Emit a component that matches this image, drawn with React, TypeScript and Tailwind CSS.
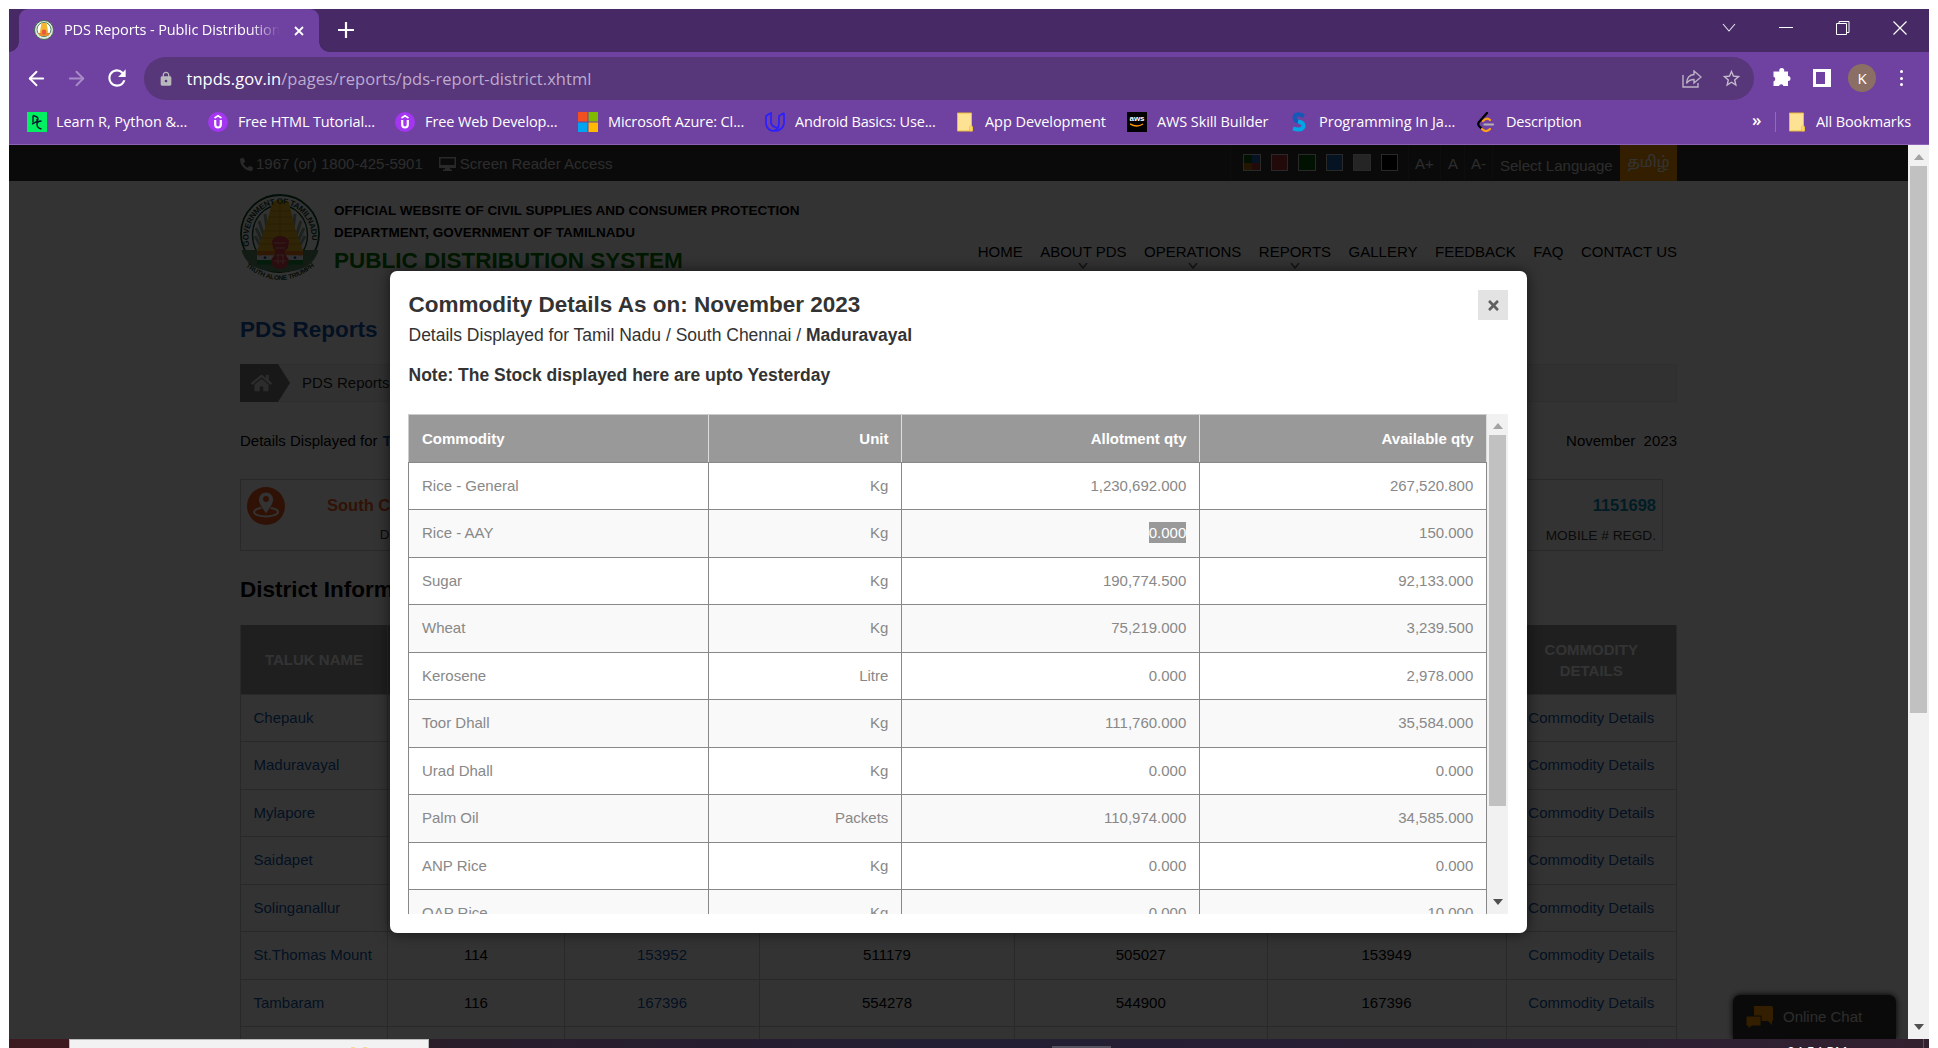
import React from "react";
import { FaPhone, FaHome, FaTimes } from "react-icons/fa";
import { FiArrowLeft, FiArrowRight } from "react-icons/fi";
import { MdRefresh, MdLock, MdStarBorder } from "react-icons/md";

const ui = "font-['Open_Sans','Noto_Sans',sans-serif]";

function Emblem({ className }: { className?: string }) {
  return (
    <svg viewBox="0 0 80 88" className={className} preserveAspectRatio="none">
      <defs>
        <path id="arcTop" d="M10 54 A31.500 34 0 1 1 70 54" />
        <path id="arcBottom" d="M4 71 Q40 101 76 71" />
      </defs>
      <ellipse cx="40" cy="39.500" rx="39" ry="38.500" fill="#fff" stroke="#0c4a26" strokeWidth="1.800" />
      <ellipse cx="40" cy="41" rx="27.500" ry="30" fill="#fff" stroke="#0c4a26" strokeWidth="1.400" />
      <path d="M25 20 L27 36 M19 27 L24 42 M16 34 L22 47 M15 42 L20 51 M55 20 L53 36 M61 27 L56 42 M64 34 L58 47 M65 42 L60 51" stroke="#8fab96" strokeWidth="3" />
      <path d="M32 8 q8 -5 17 0 L51 17 L55 34 L63 57 H17 L25 34 L30 17 Z" fill="#eeb422" />
      <path d="M31 17h19M29 23h23M27 30h26M25 37h31M22 44h36M20 50h41M40 10v32" stroke="#c98f12" strokeWidth=".8" />
      <path d="M1.500 56 H17 V70 H63 V56 H78.500 Q73 78 40 78 Q7 78 1.500 56Z" fill="#5b8a6b" />
      <rect x="17" y="57" width="46" height="4.500" fill="#ef7b1a" />
      <rect x="17" y="61.500" width="46" height="4.500" fill="#f4f4f4" />
      <rect x="17" y="66" width="46" height="4.500" fill="#108a3c" />
      <circle cx="25" cy="63.700" r="1.400" fill="#2c50b0" />
      <circle cx="55" cy="63.700" r="1.400" fill="#2c50b0" />
      <path d="M32 47 Q34 42 40 42 Q46 42 49 47 L48 54 L45 57 V60 L49 66 Q48 75 40 75 Q32 75 31 66 L35 60 V57 L33 54Z" fill="#d8404a" />
      <path d="M34 49h12M35 54h10M36 61h8M34 67h12M38 61v9M43 61v9" stroke="#f2a0a0" strokeWidth="1" />
      <text className="font-['Liberation_Sans',sans-serif] text-[8px] font-bold" fill="#133d26">
        <textPath href="#arcTop" startOffset="2" textLength="114">GOVERNMENT OF TAMILNADU</textPath>
      </text>
      <text className="font-['Liberation_Sans',sans-serif] text-[6.500px] font-bold" fill="#133d26">
        <textPath href="#arcBottom" startOffset="2" textLength="80">TRUTH ALONE TRIUMPHS</textPath>
      </text>
    </svg>
  );
}

function TabStrip() {
  return (
    <div className="flex h-[43px] shrink-0 bg-[#472a65] pl-[10px] text-white">
      <div className="relative flex h-full w-[300px] items-center rounded-t-[9px] bg-[#6f41a0] pl-[15px]">
        <span className="absolute bottom-0 -left-[10px] h-[10px] w-[10px] bg-[radial-gradient(circle_at_0_0,#472a65_9.500px,#6f41a0_10px)]" />
        <span className="absolute bottom-0 -right-[10px] h-[10px] w-[10px] bg-[radial-gradient(circle_at_100%_0,#472a65_9.500px,#6f41a0_10px)]" />
        <svg viewBox="0 0 20 20" className="h-5 w-5 -translate-y-px">
          <circle cx="10" cy="10" r="9.500" fill="#dfe9dc" stroke="#426c4d" />
          <circle cx="10" cy="9.500" r="7" fill="#fff" stroke="#4c8060" />
          <path d="M7.500 3h5l2 11h-9z" fill="#f3b62e" />
          <path d="M4 13h12l-2 3H6z" fill="#e8882d" />
          <circle cx="10" cy="12" r="2.400" fill="#e8593f" />
        </svg>
        <div className={`ml-[10px] w-[216px] -translate-y-px overflow-hidden text-[14.500px] whitespace-nowrap tracking-[-0.120px] ${ui} [mask-image:linear-gradient(to_right,#000_86%,transparent_100%)]`}>
          PDS Reports - Public Distribution
        </div>
        <svg viewBox="0 0 10 10" className="ml-[14px] h-[10px] w-[10px]" stroke="#fff" strokeWidth="1.800">
          <path d="M1 1l8 8M9 1l-8 8" />
        </svg>
      </div>
      <svg viewBox="0 0 16 16" className="mt-[13px] ml-[19px] h-4 w-4" stroke="#fff" strokeWidth="2.200">
        <path d="M8 0v16M0 8h16" />
      </svg>
      <div className="ml-auto flex gap-[43px] pt-3 pr-[22px]">
        <svg viewBox="0 0 14 14" className="h-[14px] w-[14px]" fill="none" stroke="#e8e4ee" strokeWidth="1.100"><path d="M1 3l6 7 6-7" /></svg>
        <svg viewBox="0 0 14 14" className="h-[14px] w-[14px]" stroke="#fff"><path d="M0 6.500h14" /></svg>
        <svg viewBox="0 0 14 14" className="h-[14px] w-[14px]" fill="none" stroke="#fff"><path d="M.5 2.500h10v11H.5zM3 2.500V.5h10v11h-2.500" /></svg>
        <svg viewBox="0 0 14 14" className="h-[14px] w-[14px]" stroke="#fff" strokeWidth="1.200"><path d="M.5 .5l13 13M13.500 .5l-13 13" /></svg>
      </div>
    </div>
  );
}

function Toolbar() {
  return (
    <div className={`flex h-12 shrink-0 pt-[5px] ${ui}`}>
      <div className="flex h-[42px] w-[135px] items-center pl-[16px] text-white">
        <FiArrowLeft className="h-[23px] w-[23px]" />
        <FiArrowRight className="ml-[17px] h-[23px] w-[23px] text-[#a98bc8]" />
        <MdRefresh className="ml-[16px] h-[26px] w-[26px]" />
      </div>
      <div className="flex h-[43px] w-[1610px] items-center rounded-full bg-[#573679] pr-[12px] pl-[14px]">
        <MdLock className="h-4 w-4 text-[#b9b9bd]" />
        <div className="ml-[12.500px] translate-y-px text-[16.500px] tracking-[0.045px] whitespace-nowrap text-[#bdabd0]">
          <span className="text-white">tnpds.gov.in</span>/pages/reports/pds-report-district.xhtml
        </div>
        <svg viewBox="0 0 20 18" className="mr-[19px] ml-auto h-[18px] w-[20px]" fill="none" stroke="#bcb2c6" strokeWidth="1.400">
          <path d="M1 5v12h15v-4M12 1l7 6-7 6V9.500q-5 0-7.500 4Q5 5 12 4.500z" />
        </svg>
        <MdStarBorder className="h-[21px] w-[21px] text-[#c4bacd]" />
      </div>
      <div className="flex h-[42px] items-center pl-[18px]">
        <svg viewBox="0 0 20 20" className="h-5 w-5 -translate-y-px" fill="#fff">
          <path d="M3 4.500h4.500a2.500 2.500 0 1 1 4.500 0h4v4.500a2.500 2.500 0 1 1 0 5v5h-4.500a2.300 2.300 0 0 0-4.500 0H1.500v-4.500a2.500 2.500 0 0 0 0-4.800V4.500z" />
        </svg>
        <div className="ml-[21px] h-[18px] w-[18px] border-[3px] border-r-[6px] border-white" />
        <div className="ml-[17px] flex h-7 w-7 items-center justify-center rounded-full bg-[#8b6f64] text-[15px] text-white">K</div>
        <div className="ml-[24px] flex flex-col gap-[3.500px]">
          <span className="h-[3px] w-[3px] rounded-full bg-white" />
          <span className="h-[3px] w-[3px] rounded-full bg-white" />
          <span className="h-[3px] w-[3px] rounded-full bg-white" />
        </div>
      </div>
    </div>
  );
}

function Folder() {
  return (
    <svg viewBox="0 0 20 20" className="h-5 w-5">
      <path d="M2.500 1h14v13l1 1v4h-15z" fill="#fde293" stroke="#e8b93c" />
      <path d="M14.500 19v-4l1.500-1.500 1.500 1.500v4z" fill="#fbd667" stroke="#e8b93c" strokeWidth=".6" />
    </svg>
  );
}

function Udemy() {
  return (
    <svg viewBox="0 0 20 20" className="h-5 w-5">
      <circle cx="10" cy="10" r="10" fill="#a435f0" />
      <path d="M6.500 6L10 3.800 13.500 6" fill="none" stroke="#fff" strokeWidth="1.600" />
      <path d="M7.200 8v4.500q0 3 2.800 3t2.800-3V8" fill="none" stroke="#fff" strokeWidth="2.200" />
    </svg>
  );
}

const bookmarks: { w: string; text: string; track: string; icon: React.ReactNode }[] = [
  {
    w: "w-[181px] gap-[9px]", text: "Learn R, Python &...", track: "tracking-[-0.050px]",
    icon: <svg viewBox="0 0 20 20" className="h-5 w-5"><path fill="#03ef62" d="M0 0h20v20H0z" /><path d="M6 3.500v7M6 3.500q5 1 5 3.500t-6 5M14.500 9q-4.500 0-4.500 3.500t4.500 4.500M10 7v6" fill="none" stroke="#05192d" strokeWidth="1.400" /></svg>,
  },
  { w: "w-[187px] gap-[10px]", text: "Free HTML Tutorial...", track: "tracking-[-0.150px]", icon: <Udemy /> },
  { w: "w-[183px] gap-[10px]", text: "Free Web Develop...", track: "tracking-[-0.100px]", icon: <Udemy /> },
  {
    w: "w-[187px] gap-[10px]", text: "Microsoft Azure: Cl...", track: "tracking-[-0.100px]",
    icon: <svg viewBox="0 0 20 20" className="h-5 w-5"><path fill="#f25022" d="M0 0h9.500v9.500H0z" /><path fill="#7fba00" d="M10.500 0H20v9.500h-9.500z" /><path fill="#00a4ef" d="M0 10.500h9.500V20H0z" /><path fill="#ffb900" d="M10.500 10.500H20V20h-9.500z" /></svg>,
  },
  {
    w: "w-[190px] gap-[10px]", text: "Android Basics: Use...", track: "tracking-[-0.170px]",
    icon: <svg viewBox="0 0 20 20" className="h-5 w-5" fill="none" stroke="#2b1fff" strokeWidth="1.700"><path d="M5 1.500L1 4v8q1 6 7 7 3-1 5-3-6-1-7-5V1zM19 1l-5 3v8q0 3-2 4M19 1v11q-2 7-10 7" /></svg>,
  },
  { w: "w-[172px] gap-[10px]", text: "App Development", track: "tracking-[-0.050px]", icon: <Folder /> },
  {
    w: "w-[162px] gap-[10px]", text: "AWS Skill Builder", track: "tracking-[-0.100px]",
    icon: <span className="flex h-5 w-5 flex-col items-center bg-black pt-[2px] font-['Liberation_Sans',sans-serif] text-[8px] leading-[9px] font-bold tracking-normal text-white">aws<svg viewBox="0 0 14 4" className="h-1 w-[14px] shrink-0" fill="none" stroke="#ff9900" strokeWidth="1.500"><path d="M0 1q7 4 13 0" /></svg></span>,
  },
  {
    w: "w-[187px] gap-[10px]", text: "Programming In Ja...", track: "tracking-[0px]",
    icon: <svg viewBox="0 0 20 20" className="h-5 w-5" fill="none" strokeWidth="4"><path d="M15 4Q6 0 5.500 5.500 5.500 9 10 10" stroke="#1458b8" /><path d="M9 9.500q6 1 5.500 5Q13 19 4 16.500" stroke="#00a7e6" /></svg>,
  },
  {
    w: "w-[160px] gap-[10px]", text: "Description", track: "tracking-[-0.180px]",
    icon: <svg viewBox="0 0 20 20" className="h-5 w-5" fill="none" strokeWidth="2.200" strokeLinecap="round"><path d="M11 1L3 10q-1.500 2 0 4l3 3" stroke="#000" /><path d="M7 9q4-4 7-1M6 17q4 4 8 0" stroke="#ffa116" /><path d="M8.500 12.500H17" stroke="#b3b3b3" /></svg>,
  },
];

function BookmarksBar() {
  return (
    <div className={`flex h-[45px] shrink-0 items-center border-b border-[#8b62b5] pl-[18px] text-[14.500px] whitespace-nowrap text-white ${ui}`}>
      {bookmarks.map((b) => (
        <div key={b.text} className={`flex shrink-0 items-center ${b.w} ${b.track}`}>
          {b.icon}
          <span>{b.text}</span>
        </div>
      ))}
      <span className="ml-[116px] w-[10px] -translate-y-[2px] text-[17px] font-semibold">»</span>
      <span className="ml-[13px] h-5 w-px bg-[#8f6cb8]" />
      <div className="ml-[11px] flex items-center gap-[9px] tracking-[-0.130px]">
        <Folder />
        All Bookmarks
      </div>
    </div>
  );
}

const swatches = ["bg-[#a83232]", "bg-[#0b5a0b]", "bg-[#1b62ad]", "bg-[#bbbbbb]", "bg-black"];

function TopBar() {
  return (
    <div className="h-9 shrink-0 bg-[#333]">
      <div className="ml-[231px] flex h-full w-[1437px] text-[15px] text-white">
        <div className="flex h-[38px] items-center">
          <FaPhone className="h-[13px] w-[13px] -scale-x-100 text-[#ccc]" />
          <span className="ml-[3px] text-[#ddd]">1967 (or) 1800-425-5901</span>
          <svg viewBox="0 0 17 14" className="ml-[16px] h-[14px] w-[17px]" fill="#ccc"><path fillRule="evenodd" d="M0 0h17v11h-6v1.500h2V14H4v-1.500h2V11H0zM1.500 1.500v6.500h14V1.500z" /></svg>
          <span className="ml-1 text-[#ddd]">Screen Reader Access</span>
        </div>
        <div className="ml-auto flex h-full text-[#ddd]">
          <div className="flex gap-[10px] border-x border-[#444] pt-[9px] pr-[10px] pl-[12px]">
            <span className="grid h-[17px] w-[17.500px] grid-cols-2 border border-[#ccc]">
              <i className="bg-[#0b5a0b]" /><i className="bg-[#1b62ad]" /><i className="bg-[#b26a00]" /><i className="bg-[#a83232]" />
            </span>
            {swatches.map((s) => (
              <span key={s} className={`h-[17px] w-[17.500px] border border-[#ccc] ${s}`} />
            ))}
          </div>
          <span className="w-[32px] border-r border-[#444] pl-[6px] leading-[37px]">A+</span>
          <span className="w-[24px] border-r border-[#444] pl-[7px] leading-[37px]">A</span>
          <span className="w-[28px] border-r border-[#444] pl-[6px] leading-[37px]">A-</span>
          <span className="w-[127px] pl-[7px] leading-[41px] whitespace-nowrap">Select Language</span>
          <span className="w-[57px] bg-[#f90] text-center font-['Noto_Sans_Tamil','Lohit_Tamil','FreeSerif','Noto_Sans',sans-serif] text-[15px] leading-[37px] whitespace-nowrap text-white">தமிழ்</span>
        </div>
      </div>
    </div>
  );
}

const nav = [
  { label: "HOME" },
  { label: "ABOUT PDS", menu: true },
  { label: "OPERATIONS", menu: true },
  { label: "REPORTS", menu: true },
  { label: "GALLERY" },
  { label: "FEEDBACK" },
  { label: "FAQ" },
  { label: "CONTACT US" },
];

const taluks = [
  ["Chepauk", "98", "141230", "462101", "455310", "141228"],
  ["Maduravayal", "96", "139412", "470225", "463018", "139410"],
  ["Mylapore", "104", "128834", "421907", "415222", "128830"],
  ["Saidapet", "101", "132590", "435168", "428840", "132588"],
  ["Solinganallur", "112", "150377", "498204", "491355", "150371"],
  ["St.Thomas Mount", "114", "153952", "511179", "505027", "153949"],
  ["Tambaram", "116", "167396", "554278", "544900", "167396"],
  ["", "", "", "", "", ""],
];

const talukCols = "grid grid-cols-[147px_177px_195px_255px_252.500px_239px_170.500px]";

function Site() {
  return (
    <div className="flex h-full flex-col bg-white">
      <TopBar />
      <div className="ml-[231px] w-[1437px] grow text-[15px] text-black">
        <div className="flex h-[121px] pt-[13px]">
          <Emblem className="h-[88px] w-[80px]" />
          <div className="ml-[14px] pt-[6px] font-bold whitespace-nowrap">
            <div className="text-[13.500px] leading-[22px]">
              <div>OFFICIAL WEBSITE OF CIVIL SUPPLIES AND CONSUMER PROTECTION</div>
              <div>DEPARTMENT, GOVERNMENT OF TAMILNADU</div>
            </div>
            <div className="mt-[2px] text-[22.500px] leading-[30px] text-[#007a00]">PUBLIC DISTRIBUTION SYSTEM</div>
          </div>
          <nav className="ml-auto flex gap-[17.500px] pt-[48px] text-[15px]">
            {nav.map((n) => (
              <div key={n.label} className="flex flex-col items-center leading-[20px] whitespace-nowrap">
                {n.label}
                {n.menu && (
                  <svg viewBox="0 0 10 6" className="mt-px h-[6px] w-[10px]" fill="none" stroke="#666" strokeWidth="1.600"><path d="M1 0l4 5 4-5" /></svg>
                )}
              </div>
            ))}
          </nav>
        </div>
        <h1 className="mt-[14px] text-[22.500px] leading-[28px] font-bold text-[#1356a8]">PDS Reports</h1>
        <div className="mt-[20px] flex h-[38px] items-center border border-[#eaeaea] bg-[#f5f5f5] text-[15px] text-[#222]">
          <div className="-my-px -ml-px flex h-[38px] w-[50px] items-center bg-[#777] pl-[11px] [clip-path:polygon(0_0,76%_0,100%_50%,76%_100%,0_100%)]">
            <FaHome className="h-[20px] w-[21px] text-[#ddd]" />
          </div>
          <span className="ml-[12px]">PDS Reports</span>
        </div>
        <div className="mt-[29px] flex h-[20px] justify-between text-[15px] leading-5">
          <span>Details Displayed for <b className="ml-px text-[#1356a8]">Tamil Nadu / South Chennai</b></span>
          <span className="whitespace-pre">November  2023</span>
        </div>
        <div className="mt-[28px] flex h-[72px] w-[1423px] justify-between border border-[#ccc] pt-[7px] pr-[6px] pl-[6px]">
          <svg viewBox="0 0 38 38" className="h-[38px] w-[38px]">
            <circle cx="19" cy="19" r="19" fill="#e85a1c" />
            <ellipse cx="19" cy="25" rx="12" ry="4.500" fill="none" stroke="#fff" strokeWidth="2" />
            <path d="M19 27C15 21 11.500 17 11.500 12.500a7.500 7.500 0 0 1 15 0C26.500 17 23 21 19 27z" fill="#fff" stroke="#e85a1c" />
            <circle cx="19" cy="12" r="3" fill="#e85a1c" />
          </svg>
          <div className="mr-auto ml-[42px] w-[115px] text-right">
            <div className="pt-[8px] text-[16.500px] leading-[20px] font-bold whitespace-nowrap text-[#f15a24]">South Chennai</div>
            <div className="pt-[10px] text-[13.500px] leading-[20px] text-[#333]">DISTRICT</div>
          </div>
          <div className="text-right">
            <div className="pt-[8px] text-[16.500px] leading-[20px] font-bold text-[#0091b8]">1151698</div>
            <div className="pt-[10px] text-[13.700px] leading-[21px] text-[#333]">MOBILE # REGD.</div>
          </div>
        </div>
        <h2 className="mt-[25px] text-[22.500px] leading-[28px] font-bold text-[#000]">District Information</h2>
        <div className="mt-[21px]">
          <div className={`${talukCols} h-[69px] w-[1437px] border-l border-[#ccc] bg-[#999] font-bold text-white`}>
            {["TALUK NAME", "NO. OF SHOPS", "NO. OF CARDS", "BENEFICIARIES", "AADHAR REGD.", "MOBILE REGD.", "COMMODITY DETAILS"].map((h) => (
              <div key={h} className="flex items-center justify-center border-r border-[#ccc] px-5 text-center leading-[21px]">{h}</div>
            ))}
          </div>
          {taluks.map((r, i) => (
            <div key={i} className={`${talukCols} h-[47.450px] w-[1437px] border-t border-l border-[#ccc] leading-[46.500px]`}>
              <div className="border-r border-[#ccc] pl-[12.500px] text-[#0f57a8]">{r[0]}</div>
              <div className="border-r border-[#ccc] text-center">{r[1]}</div>
              <div className="border-r border-[#ccc] text-center text-[#0f57a8]">{r[2]}</div>
              <div className="border-r border-[#ccc] text-center">{r[3]}</div>
              <div className="border-r border-[#ccc] text-center">{r[4]}</div>
              <div className="border-r border-[#ccc] text-center">{r[5]}</div>
              <div className="border-r border-[#ccc] text-center text-[#0f57a8]">{r[0] && "Commodity Details"}</div>
            </div>
          ))}
        </div>
      </div>
    </div>
  );
}

const rows = [
  ["Rice - General", "Kg", "1,230,692.000", "267,520.800"],
  ["Rice - AAY", "Kg", "0.000", "150.000"],
  ["Sugar", "Kg", "190,774.500", "92,133.000"],
  ["Wheat", "Kg", "75,219.000", "3,239.500"],
  ["Kerosene", "Litre", "0.000", "2,978.000"],
  ["Toor Dhall", "Kg", "111,760.000", "35,584.000"],
  ["Urad Dhall", "Kg", "0.000", "0.000"],
  ["Palm Oil", "Packets", "110,974.000", "34,585.000"],
  ["ANP Rice", "Kg", "0.000", "0.000"],
  ["OAP Rice", "Kg", "0.000", "10.000"],
];

const commodityCols = "grid grid-cols-[300px_193px_298px_287px]";

function Arrow({ up, light }: { up?: boolean; light?: boolean }) {
  return (
    <svg viewBox="0 0 10 6" className={up ? "h-[6px] w-[10px]" : "h-[6px] w-[10px] rotate-180"} fill={light ? "#a3a3a3" : "#505050"}>
      <path d="M5 0l5 6H0z" />
    </svg>
  );
}

function Modal() {
  return (
    <div className="absolute top-[126px] left-[381px] h-[662px] w-[1137px] rounded-[7px] bg-white pt-[19px] pl-[18px] text-[#333] shadow-[0_0_14px_rgba(0,0,0,0.6)]">
      <div className="flex h-[124px] justify-between pr-[19px]">
        <div className="pl-[0.500px] whitespace-nowrap">
          <div className="text-[22.500px] leading-[30px] font-bold">Commodity Details As on: November 2023</div>
          <div className="mt-[3px] text-[17.500px] leading-[25px]">Details Displayed for Tamil Nadu / South Chennai / <b>Maduravayal</b></div>
          <div className="mt-[15px] text-[17.500px] leading-[25px] font-bold">Note: The Stock displayed here are upto Yesterday</div>
        </div>
        <div className="flex h-[30px] w-[30px] items-center justify-center bg-[#e3e3e3]">
          <FaTimes className="h-[15px] w-[15px] text-[#606060]" />
        </div>
      </div>
      <div className="flex h-[500px] w-[1100px] overflow-hidden">
        <div className="w-[1079px] text-[15px]">
          <div className={`${commodityCols} h-[48px] w-[1079px] border-t border-l border-[#ccc] bg-[#999] leading-[47px] font-bold text-white`}>
            {["Commodity", "Unit", "Allotment qty", "Available qty"].map((h, i) => (
              <div key={h} className={i ? "border-r border-[#ddd] pr-[12.500px] text-right" : "border-r border-[#ddd] pl-[13px]"}>{h}</div>
            ))}
          </div>
          {rows.map((r, y) => (
            <div key={r[0]} className={`${commodityCols} h-[47.450px] w-[1079px] border-t border-l border-[#888] text-[#888] ${y % 2 ? "bg-[#f9f9f9]" : "bg-white"}`}>
              {r.map((c, i) => (
                <div key={i} className={i ? "border-r border-[#888] pr-[12.700px] text-right leading-[46.500px]" : "border-r border-[#888] pl-[13px] leading-[46.500px]"}>
                  {y === 1 && i === 2 ? <span className="bg-[#999] py-[2px] text-white">{c}</span> : c}
                </div>
              ))}
            </div>
          ))}
        </div>
        <div className="flex w-[21px] flex-col items-center bg-[#f1f1f1] pt-[9px] pb-[9px]">
          <Arrow up light />
          <div className="mt-[6px] mb-auto h-[371px] w-[17px] bg-[#c1c1c1]" />
          <Arrow />
        </div>
      </div>
    </div>
  );
}

function ChatTab() {
  return (
    <div className="absolute right-[12px] bottom-0 flex h-[44px] w-[163px] items-center rounded-t-[7px] bg-[#333] pl-[13px] text-[15px] text-[#ddd] shadow-[0_0_6px_#000]">
      <svg viewBox="0 0 27 23" className="h-[23px] w-[27px]" fill="#f90">
        <path d="M8 0h17q2 0 2 2v12q0 1-1 1v4l-4-4H8z" />
        <path d="M1 10h14v10H6l-4 3v-3H0v-9z" stroke="#333" />
      </svg>
      <span className="ml-[10px]">Online Chat</span>
    </div>
  );
}

export default function App() {
  return (
    <div className="flex h-[1048px] w-[1938px] flex-col overflow-hidden bg-white px-[9px] pt-[9px] font-['Liberation_Sans',Arial,sans-serif]">
      <div className="flex h-[136px] shrink-0 flex-col bg-[#6f41a0]">
        <TabStrip />
        <Toolbar />
        <BookmarksBar />
      </div>
      <div className="flex h-[894px] shrink-0">
        <div className="relative h-full w-[1899px] overflow-hidden">
          <Site />
          <ChatTab />
          <div className="absolute inset-0 bg-black/80" />
          <Modal />
        </div>
        <div className="flex w-[21px] flex-col items-center bg-[#f1f1f1] pt-[9px] pb-[9px]">
          <Arrow up light />
          <div className="mt-[6px] mb-auto h-[547px] w-[17px] bg-[#c1c1c1]" />
          <Arrow />
        </div>
      </div>
      <div className="flex h-[9px] shrink-0 overflow-hidden bg-[linear-gradient(to_right,#3c1a1f_0,#3c1a1f_3%,#281d2b_25%,#241f33_50%,#2a1f33_80%,#33202f_100%)]">
        <div className="ml-[60px] flex h-[9px] w-[360px] justify-center gap-2 border border-b-0 border-[#bbb] bg-[#f2f2f2] pt-[7px] pl-[220px]">
          <span className="h-[2px] w-1 bg-[#f5d9a0]" />
          <span className="h-[2px] w-1 bg-[#f5d9a0]" />
        </div>
        <div className="mt-[7px] ml-[623px] h-[2px] w-[59px] bg-[#57525f]" />
        <div className="mt-[6px] ml-[676px] h-[3px] overflow-hidden text-[14px] leading-[14px] whitespace-nowrap text-white"><span className={ui}>04:54 PM</span></div>
        <div className="mr-[5px] ml-auto h-full w-px bg-[#5f5060]" />
      </div>
    </div>
  );
}
